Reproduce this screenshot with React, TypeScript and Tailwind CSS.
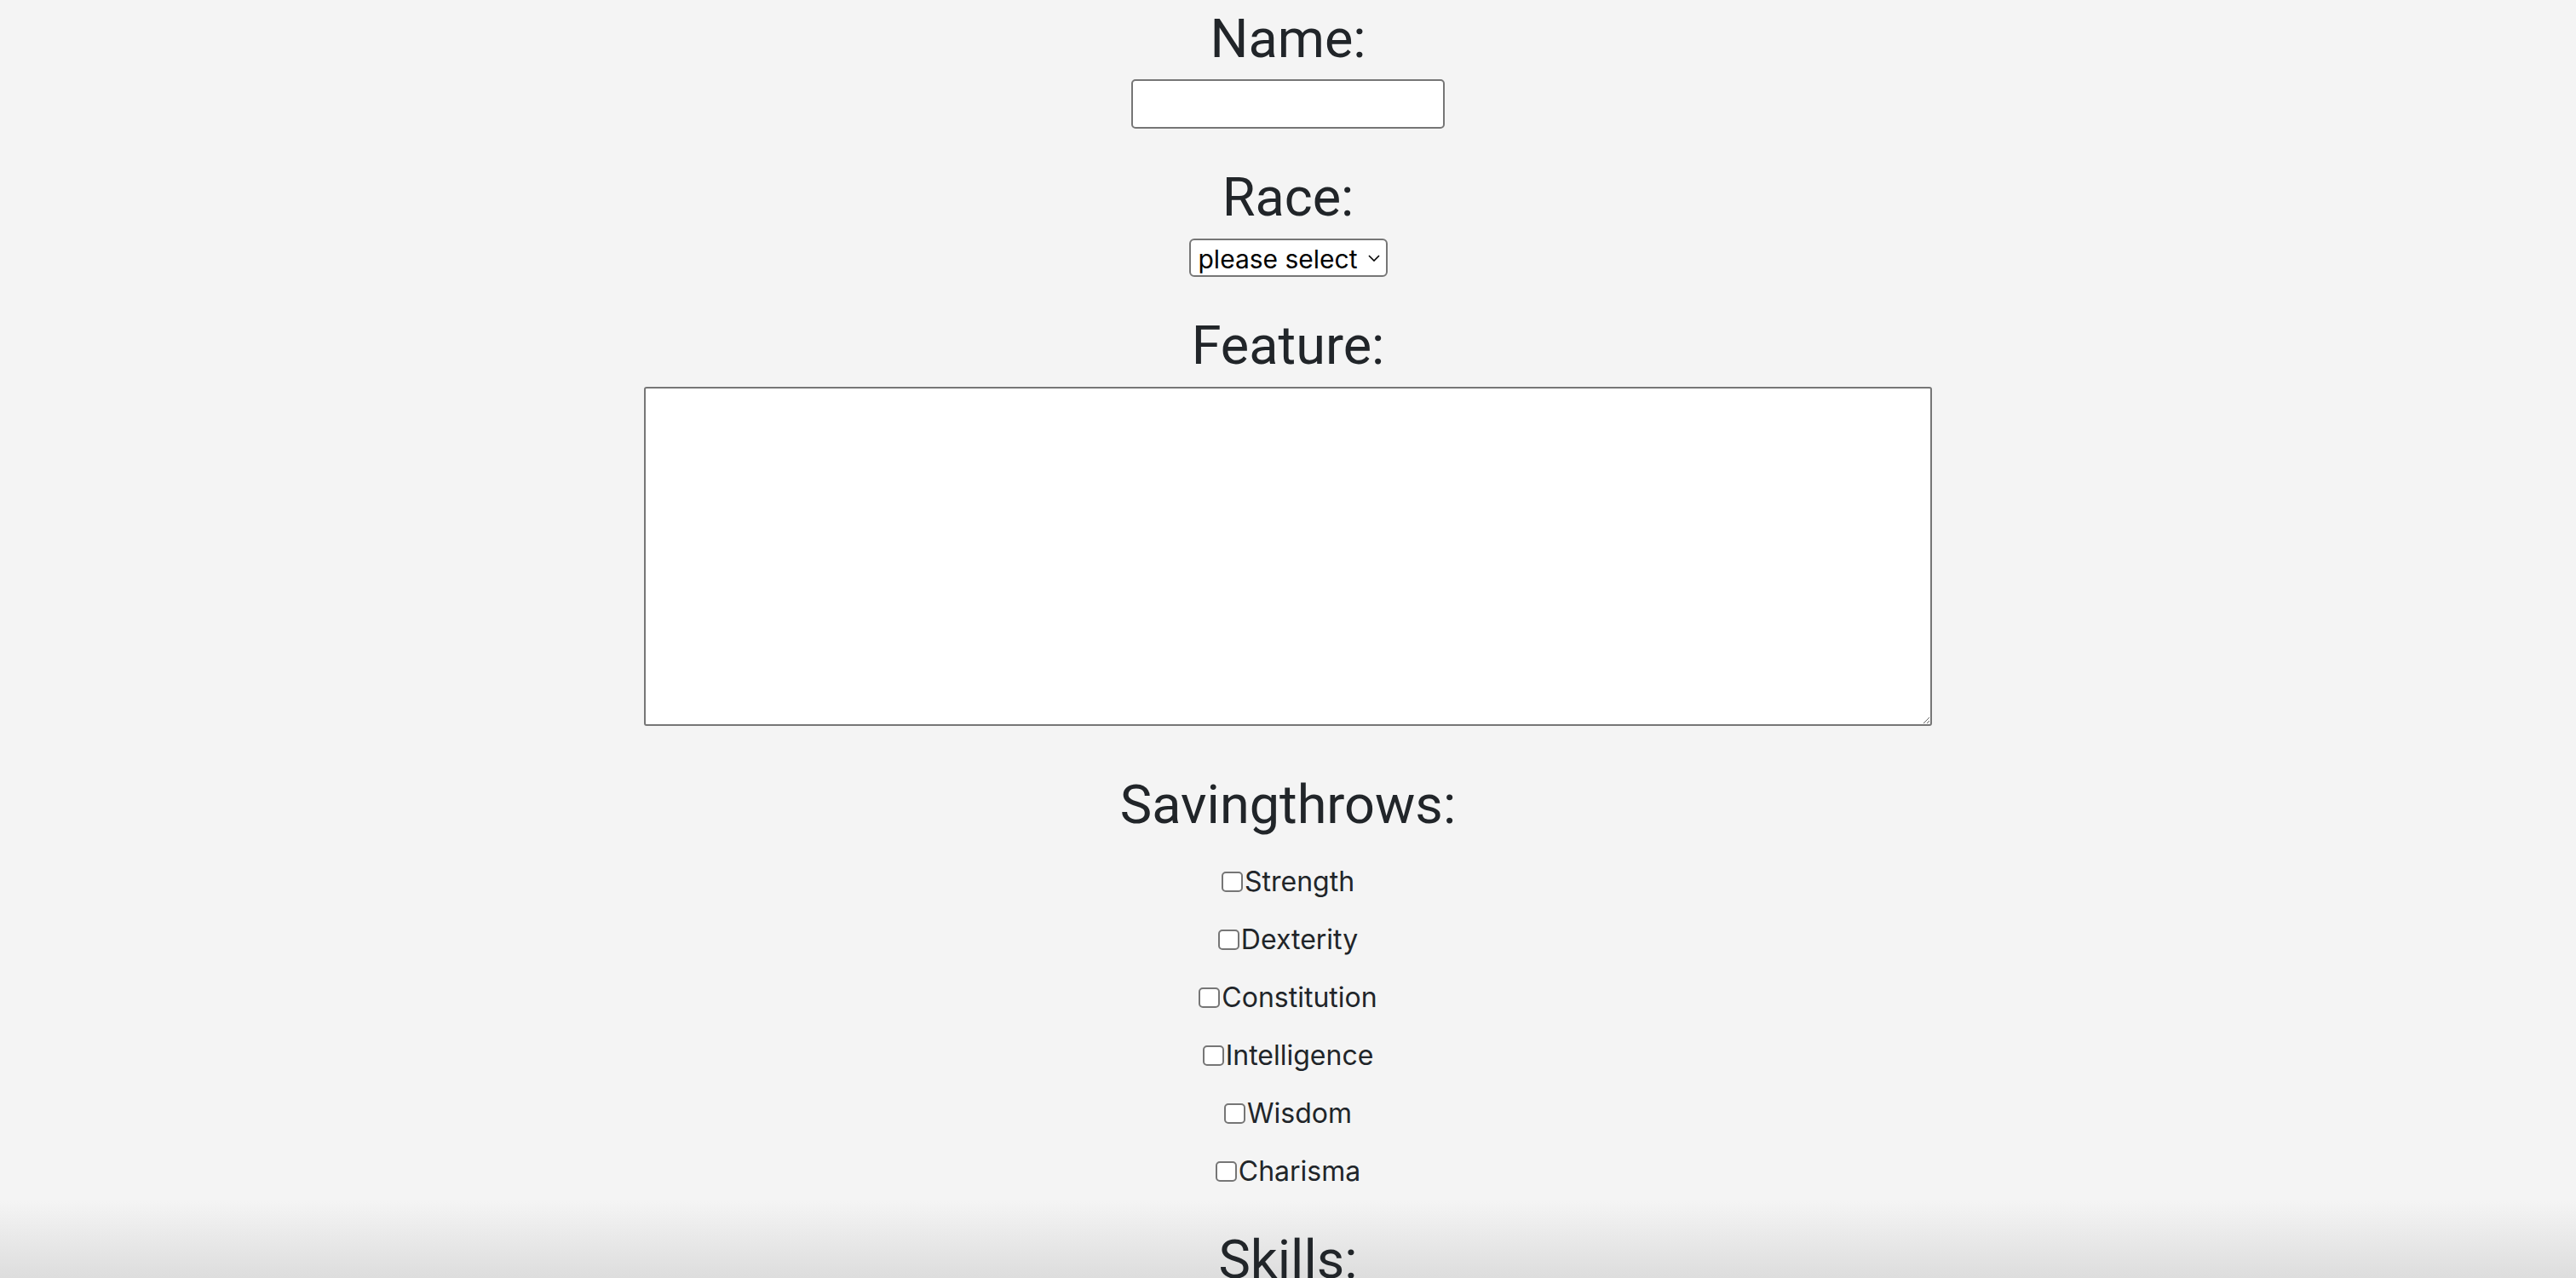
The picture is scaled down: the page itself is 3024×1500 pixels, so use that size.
import { useState } from 'react'

const savingthrows = ['Strength', 'Dexterity', 'Constitution', 'Intelligence', 'Wisdom', 'Charisma']

function Heading({ children, className = '' }: { children: React.ReactNode; className?: string }) {
  return (
    <h2 className={`font-['Roboto','Inter',sans-serif] text-[63px] leading-[77px] font-normal text-[#212529] ${className}`}>
      {children}
    </h2>
  )
}

function CheckRow({ label }: { label: string }) {
  const [checked, setChecked] = useState(false)
  return (
    <label className="h-[68px] flex items-center justify-center text-[32px] text-[#212529]">
      <input
        type="checkbox"
        checked={checked}
        onChange={(e) => setChecked(e.target.checked)}
        className="appearance-none w-[25px] h-[24px] mr-[2px] bg-white border-2 border-[#767676] rounded-[5px] checked:bg-blue-500"
      />
      {label}
    </label>
  )
}

export default function App() {
  const [name, setName] = useState('')
  const [race, setRace] = useState('')
  const [feature, setFeature] = useState('')

  return (
    <div className="relative h-[1500px] overflow-hidden bg-[#f4f4f4] font-['Inter','Helvetica_Neue',Arial,sans-serif]">
      {/* window shadow along the bottom edge */}
      <div className="pointer-events-none absolute inset-x-0 bottom-0 h-[90px] bg-linear-to-b from-[#f4f4f400] to-[#dddddd]" />

      <form className="relative flex flex-col items-center text-center">

        <Heading className="mt-[7px]">Name:</Heading>
        <input
          value={name}
          onChange={(e) => setName(e.target.value)}
          className="mt-[9px] w-[368px] h-[58px] bg-white border-2 border-[#767676] rounded-[5px] px-2 text-[32px]"
        />

        <Heading className="mt-[42px]">Race:</Heading>
        <div className="relative mt-[10px]">
          <select
            value={race}
            onChange={(e) => setRace(e.target.value)}
            className="appearance-none w-[233px] h-[45px] bg-white border-2 border-[#767676] rounded-[6px] pl-[9px] text-[30px] text-black"
          >
            <option value="">please select</option>
            <option value="dwarf">Dwarf</option>
            <option value="elf">Elf</option>
            <option value="human">Human</option>
          </select>
          <svg
            className="pointer-events-none absolute right-[9px] top-[19px]"
            width="14"
            height="8"
            viewBox="0 0 14 8"
            fill="none"
          >
            <path d="M1 1l6 6 6-6" stroke="#000" strokeWidth="1.6" />
          </svg>
        </div>

        <Heading className="mt-[42px]">Feature:</Heading>
        <textarea
          value={feature}
          onChange={(e) => setFeature(e.target.value)}
          className="mt-[10px] w-[1512px] h-[398px] bg-white border-2 border-[#767676] rounded-[3px] p-2 text-[32px] block"
        />

        <Heading className="mt-[54px]">Savingthrows:</Heading>
        <div className="mt-[18px] flex flex-col">
          {savingthrows.map((s) => (
            <CheckRow key={s} label={s} />
          ))}
        </div>

        <Heading className="mt-[31px]">Skills:</Heading>

      </form>
    </div>
  )
}
